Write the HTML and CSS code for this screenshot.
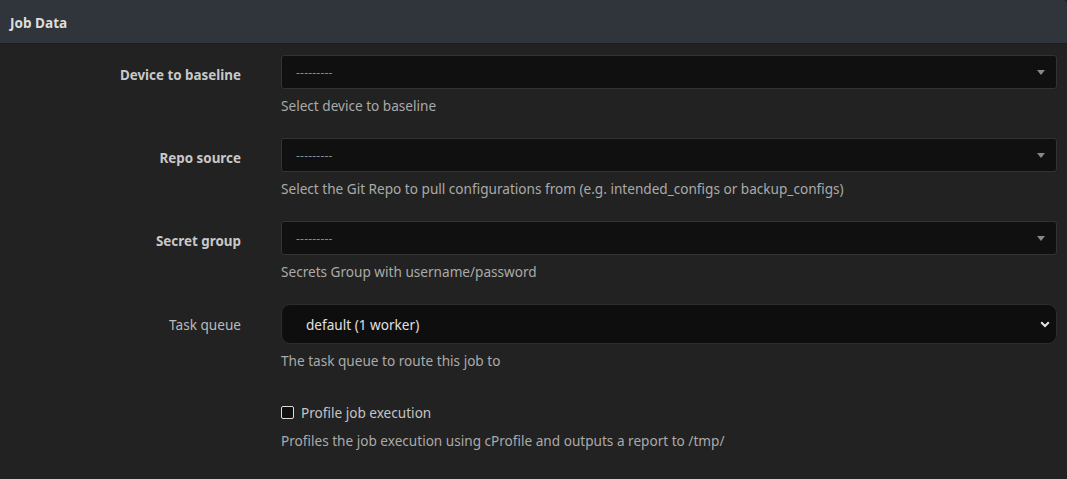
FILE: index.html
```html
<!DOCTYPE html>
<html>
<head>
<meta charset="utf-8">
<link rel="stylesheet" href="styles.css">
</head>
<body>
<div class="panel">
  <div class="panel-heading">Job Data</div>
  <div class="panel-body">
    <div class="row">
      <div class="label bold">Device to baseline</div>
      <div class="field">
        <div class="s2"><span class="ph">---------</span><span class="tri"></span></div>
        <div class="help">Select device to baseline</div>
      </div>
    </div>
    <div class="row">
      <div class="label bold">Repo source</div>
      <div class="field">
        <div class="s2"><span class="ph">---------</span><span class="tri"></span></div>
        <div class="help">Select the Git Repo to pull configurations from (e.g. intended_configs or backup_configs)</div>
      </div>
    </div>
    <div class="row">
      <div class="label bold">Secret group</div>
      <div class="field">
        <div class="s2"><span class="ph">---------</span><span class="tri"></span></div>
        <div class="help">Secrets Group with username/password</div>
      </div>
    </div>
    <div class="row">
      <div class="label tall">Task queue</div>
      <div class="field">
        <div class="sel"><span>default (1 worker)</span>
          <svg class="chev" width="10" height="7" viewBox="0 0 10 7"><path d="M1.2 1.2 L5 5 L8.8 1.2" fill="none" stroke="#e6e6e6" stroke-width="2"/></svg>
        </div>
        <div class="help">The task queue to route this job to</div>
      </div>
    </div>
    <div class="row check-row">
      <div class="label"></div>
      <div class="field">
        <label class="check"><span class="box"></span>Profile job execution</label>
        <div class="help">Profiles the job execution using cProfile and outputs a report to /tmp/</div>
      </div>
    </div>
  </div>
</div>
</body>
</html>
```
FILE: styles.css
```css
html, body {
  margin: 0;
  padding: 0;
  background: #222222;
  font-family: "Noto Sans", "Open Sans", sans-serif;
  font-size: 13.6px;
  color: #cccccc;
}
.panel {
  width: 1067px;
  height: 479px;
  background: #222222;
  overflow: hidden;
}
.panel-heading {
  height: 44px;
  box-sizing: border-box;
  padding: 1px 10px 0;
  display: flex;
  align-items: center;
  background: #2f353b;
  border-bottom: 1px solid #1c1c1c;
  border-top-right-radius: 4px;
  color: #dddddd;
  font-weight: 700;
  font-size: 13.6px;
}
.panel-body {
  padding-top: 11px;
}
.row {
  display: flex;
  margin-bottom: 22px;
}
.label {
  width: 241px;
  flex: none;
  text-align: right;
  height: 34px;
  line-height: 34px;
  padding-top: 3px;
  box-sizing: border-box;
  color: #bbbbbb;
}
.label.bold {
  font-weight: 700;
  color: #c8c8c8;
  font-size: 13.4px;
}
.label.tall {
  height: 40px;
  line-height: 40px;
  padding-top: 1px;
}
.field {
  margin-left: 40px;
  width: 776px;
}
.s2 {
  height: 34px;
  box-sizing: border-box;
  background: #101010;
  border: 1px solid #333333;
  border-radius: 3px;
  display: flex;
  align-items: center;
  justify-content: space-between;
  padding: 0 10px 0 14px;
}
.ph {
  font-size: 12px;
  color: #8a8a8a;
  letter-spacing: 0.2px;
}
.tri {
  width: 0;
  height: 0;
  border-left: 4px solid transparent;
  border-right: 4px solid transparent;
  border-top: 5px solid #888888;
  margin-right: 1px;
}
.sel {
  height: 40px;
  box-sizing: border-box;
  background: #0e0e0e;
  border: 1px solid #2c2c2c;
  border-radius: 9px;
  display: flex;
  align-items: center;
  justify-content: space-between;
  padding: 0 6px 0 24px;
  color: #e0e0e0;
}
.chev {
  display: block;
}
.help {
  margin-top: 7px;
  line-height: 20px;
  color: #aaaaaa;
}
.check-row {
  padding-top: 9px;
}
.check-row .label {
  height: 20px;
  padding-top: 0;
}
.check {
  display: flex;
  align-items: center;
  height: 20px;
  color: #c4c4c4;
}
.box {
  width: 11px;
  height: 11px;
  border: 1px solid #dddddd;
  border-radius: 2px;
  background: #101010;
  margin-right: 7px;
}
.check-row .help {
  margin-top: 9px;
}
```
